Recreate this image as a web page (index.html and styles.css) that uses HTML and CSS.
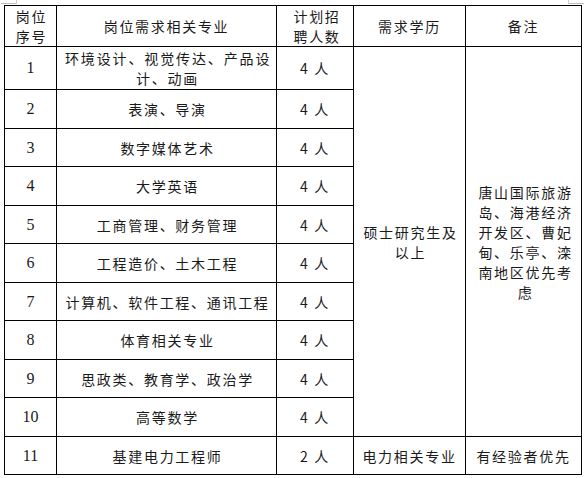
FILE: index.html
```html
<!DOCTYPE html>
<html lang="zh-CN">
<head>
<meta charset="utf-8">
<title>岗位需求表</title>
<link rel="stylesheet" href="styles.css">
</head>
<body>
<div class="marks"><span class="mark mark-left"></span><span class="mark mark-right"></span></div>
<table class="jobs">
  <colgroup>
    <col class="c1"><col class="c2"><col class="c3"><col class="c4"><col class="c5">
  </colgroup>
  <thead>
    <tr class="r-head">
      <th>岗位序号</th>
      <th>岗位需求相关专业</th>
      <th>计划招聘人数</th>
      <th>需求学历</th>
      <th>备注</th>
    </tr>
  </thead>
  <tbody>
    <tr class="r-tall">
      <td class="num">1</td>
      <td class="major"><span class="just">环境设计、视觉传达、产品设</span>计、动画</td>
      <td>4 人</td>
      <td rowspan="10" class="degree">硕士研究生及以上</td>
      <td rowspan="10" class="note">唐山国际旅游岛、海港经济开发区、曹妃甸、乐亭、滦南地区优先考虑</td>
    </tr>
    <tr class="r-a"><td class="num">2</td><td class="major">表演、导演</td><td>4 人</td></tr>
    <tr class="r-b"><td class="num">3</td><td class="major">数字媒体艺术</td><td>4 人</td></tr>
    <tr class="r-a"><td class="num">4</td><td class="major">大学英语</td><td>4 人</td></tr>
    <tr class="r-b"><td class="num">5</td><td class="major">工商管理、财务管理</td><td>4 人</td></tr>
    <tr class="r-a"><td class="num">6</td><td class="major">工程造价、土木工程</td><td>4 人</td></tr>
    <tr class="r-b"><td class="num">7</td><td class="major">计算机、软件工程、通讯工程</td><td>4 人</td></tr>
    <tr class="r-a"><td class="num">8</td><td class="major">体育相关专业</td><td>4 人</td></tr>
    <tr class="r-b"><td class="num">9</td><td class="major">思政类、教育学、政治学</td><td>4 人</td></tr>
    <tr class="r-a"><td class="num">10</td><td class="major">高等数学</td><td>4 人</td></tr>
    <tr class="r-b"><td class="num">11</td><td class="major">基建电力工程师</td><td>2 人</td><td>电力相关专业</td><td>有经验者优先</td></tr>
  </tbody>
</table>
</body>
</html>
```
FILE: styles.css
```css
html, body {
  margin: 0;
  padding: 0;
  background: #fff;
}
body {
  width: 586px;
  height: 478px;
  overflow: hidden;
  font-family: "Noto Sans CJK SC", "Noto Sans", sans-serif;
  color: #1a1a1a;
}
.marks {
  display: flex;
  justify-content: space-between;
  height: 4px;
  padding: 0 2px 0 1px;
}
.mark {
  display: block;
  width: 15px;
  height: 3px;
  border-bottom: 1px solid #bdbdbd;
}
.mark-left { border-right: 1px solid #d0d0d0; }
.mark-right { border-left: 1px solid #d0d0d0; }

.jobs {
  margin: 1px 0 0 4px;
  border-collapse: separate;
  border-spacing: 0;
  table-layout: fixed;
  width: 578px;
  border-top: 1px solid #000;
  border-left: 1px solid #000;
}
.c1 { width: 52px; }
.c2 { width: 220px; }
.c3 { width: 77px; }
.c4 { width: 112px; }
.c5 { width: 116px; }

.jobs th, .jobs td {
  box-sizing: border-box;
  border-right: 1px solid #000;
  border-bottom: 1px solid #000;
  padding: 0 4px;
  font-weight: 400;
  font-size: 14px;
  line-height: 20px;
  letter-spacing: 1.7px;
  text-align: center;
  vertical-align: middle;
  word-break: break-all;
}
.jobs th:first-child { padding: 0 2px 0 4px; }
.jobs th:nth-child(3) { padding: 0 6px 0 10px; }
.r-head { height: 41px; }
.r-tall { height: 43px; }
.r-a { height: 39px; }
.r-b { height: 38px; }
.jobs td.num {
  font-family: "Liberation Serif", "Times New Roman", serif;
  font-size: 16px;
  letter-spacing: 0;
  padding: 0;
}
.jobs td.major { padding: 0 6px 0 8px; }
.just {
  display: block;
  text-align: justify;
  text-align-last: justify;
  letter-spacing: 0.5px;
}
.jobs td.degree { padding: 0 4px 0 6px; }
.jobs td.note { padding: 0 4px 0 8px; }
```
